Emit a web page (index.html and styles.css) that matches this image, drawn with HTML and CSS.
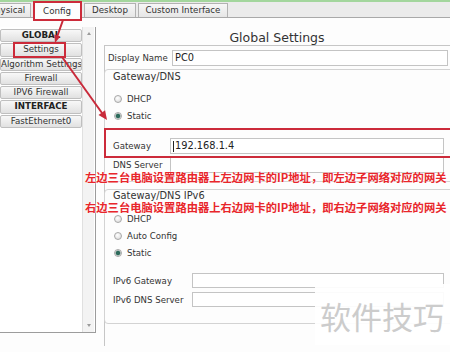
FILE: index.html
```html
<!DOCTYPE html>
<html>
<head>
<meta charset="utf-8">
<link rel="stylesheet" href="styles.css">
</head>
<body>
<div class="topline"></div>
<div class="tabbar">
  <div class="tab t-phys">Physical</div>
  <div class="tab t-config active">Config</div>
  <div class="tab t-desk">Desktop</div>
  <div class="tab t-custom">Custom Interface</div>
</div>
<div class="main">
  <div class="side">
    <div class="side-list">
      <div class="item bold">GLOBAL</div>
      <div class="item">Settings</div>
      <div class="item">Algorithm Settings</div>
      <div class="item">Firewall</div>
      <div class="item">IPV6 Firewall</div>
      <div class="item bold">INTERFACE</div>
      <div class="item">FastEthernet0</div>
    </div>
    <div class="scroll"><span class="arr up"></span><span class="arr down"></span></div>
  </div>
  <div class="content">
    <div class="title">Global Settings</div>
    <div class="frame">
      <div class="row dn"><span class="lbl">Display Name</span><span class="input w-dn">PC0</span></div>
      <div class="group g1">
        <div class="legend">Gateway/DNS</div>
        <div class="radios">
          <div class="radio"><span class="dot"></span>DHCP</div>
          <div class="radio on"><span class="dot"></span>Static</div>
        </div>
        <div class="row r-gw"><span class="lbl">Gateway</span><span class="input w1"><span class="caret"></span>192.168.1.4</span></div>
        <div class="row r-dns"><span class="lbl">DNS Server</span><span class="input w1"></span></div>
      </div>
      <div class="group g2">
        <div class="legend">Gateway/DNS IPv6</div>
        <div class="radios">
          <div class="radio"><span class="dot"></span>DHCP</div>
          <div class="radio"><span class="dot"></span>Auto Config</div>
          <div class="radio on"><span class="dot"></span>Static</div>
        </div>
        <div class="row r-v6gw"><span class="lbl">IPv6 Gateway</span><span class="input w2"></span></div>
        <div class="row r-v6dns"><span class="lbl">IPv6 DNS Server</span><span class="input w2"></span></div>
      </div>
    </div>
  </div>
</div>

<div class="box b-config"></div>
<div class="box b-settings"></div>
<div class="box b-gw"></div>
<svg class="arrows" width="450" height="352" viewBox="0 0 450 352">
  <line x1="63" y1="20" x2="57" y2="37" stroke="#c92a3a" stroke-width="2"/>
  <polygon points="55,43 60.3,36.4 54.3,34.4" fill="#c92a3a"/>
  <line x1="62" y1="57" x2="102" y2="113" stroke="#c92a3a" stroke-width="2"/>
  <polygon points="107,120 98.5,114.9 105.1,110.3" fill="#c92a3a"/>
</svg>
<div class="note n1">左边三台电脑设置路由器上左边网卡的IP地址，即左边子网络对应的网关</div>
<div class="note n2">右边三台电脑设置路由器上右边网卡的IP地址，即右边子网络对应的网关</div>
<div class="wm">软件技巧</div>
</body>
</html>
```
FILE: styles.css
```css
body {
  margin: 0;
  width: 450px;
  height: 352px;
  overflow: hidden;
  position: relative;
  background: #fdfdfd;
  font-family: "DejaVu Sans", sans-serif;
  color: #333;
}
.topline {
  height: 2px;
  background: #a3d69d;
}
.tabbar {
  height: 15px;
  background: #ebebeb;
  border-bottom: 1px solid #a9a9a9;
  display: flex;
  align-items: flex-end;
  gap: 2px;
  margin-left: -16px;
}
.tab {
  box-sizing: border-box;
  height: 14px;
  border: 1px solid #b2b2b2;
  border-bottom: none;
  background: linear-gradient(#f7f7f7, #e6e6e6);
  font-size: 8.7px;
  line-height: 13px;
  text-align: center;
  white-space: nowrap;
  color: #333;
}
.t-phys { width: 47px; }
.t-config { width: 48px; }
.t-desk { width: 52px; margin-left: 1px; }
.t-custom { width: 90px; }
.tab.active {
  height: 16px;
  margin-bottom: -1px;
  background: #fdfdfd;
  line-height: 16px;
}
.main {
  display: flex;
  align-items: flex-start;
}
.side {
  width: 95px;
  height: 305px;
  margin-top: 9px;
  border-right: 1px solid #9c9c9c;
  border-bottom: 1px solid #9c9c9c;
  display: flex;
  background: #fff;
}
.side-list {
  width: 82px;
  padding-top: 2px;
  display: flex;
  flex-direction: column;
  gap: 1px;
}
.item {
  box-sizing: border-box;
  height: 13.3px;
  line-height: 11.5px;
  border: 1px solid #bfbfbf;
  border-radius: 2px;
  background: linear-gradient(#f8f8f8, #e1e1e1);
  font-size: 8.7px;
  text-align: center;
  white-space: nowrap;
  overflow: hidden;
  color: #333;
}
.item.bold { font-weight: bold; color: #222; }
.scroll {
  width: 12px;
  border-left: 1px solid #e0e0e0;
  background: #f3f3f3;
  display: flex;
  flex-direction: column;
  justify-content: space-between;
  align-items: center;
  padding: 5px 0;
  box-sizing: border-box;
}
.arr {
  width: 0;
  height: 0;
  border-left: 2.5px solid transparent;
  border-right: 2.5px solid transparent;
}
.arr.up { border-bottom: 3px solid #9a9a9a; }
.arr.down { border-top: 3px solid #9a9a9a; }
.content {
  margin-left: 8px;
  width: 346px;
  margin-top: 9px;
}
.title {
  box-sizing: border-box;
  height: 18px;
  padding-top: 4px;
  font-size: 12.5px;
  line-height: 14px;
  text-align: center;
  color: #333;
}
.frame {
  border-top: 1px solid #c6c6c6;
  border-left: 1px solid #c6c6c6;
  height: 300px;
}
.row {
  display: flex;
  align-items: center;
  height: 16px;
}
.lbl {
  font-size: 8.6px;
  white-space: nowrap;
  color: #333;
}
.input {
  box-sizing: border-box;
  height: 16px;
  border: 1px solid #c4c4c4;
  background: #fff;
  font-size: 9.8px;
  line-height: 14px;
  padding-left: 2px;
  color: #222;
  display: flex;
  align-items: center;
}
.caret {
  width: 1px;
  height: 11px;
  background: #222;
  margin-right: 1px;
}
.dn { margin-top: 4px; padding-left: 3px; }
.dn .lbl { width: 64px; }
.w-dn { width: 276px; }
.group {
  box-sizing: border-box;
  width: 360px;
  margin-left: -1px;
  border: 1px solid #d3d3d3;
  border-radius: 4px;
  padding-left: 8px;
}
.legend {
  font-size: 9.8px;
  height: 14px;
  line-height: 14px;
  color: #333;
}
.radios { padding-left: 1px; }
.radio {
  height: 17px;
  display: flex;
  align-items: center;
  font-size: 8.6px;
  color: #333;
}
.dot {
  box-sizing: border-box;
  width: 8px;
  height: 8px;
  border: 1px solid #a8a8a8;
  border-radius: 50%;
  margin-right: 5px;
  background: radial-gradient(circle at 40% 35%, #ffffff, #d6d6d6);
}
.radio.on .dot {
  background: radial-gradient(circle, #2d6a5b 0 1.8px, #7fa79c 2.3px, #dcdcdc 2.8px);
}
.g1 { margin-top: 3px; padding-bottom: 8px; }
.g1 .radios { margin-top: 6px; }
.g1 .lbl { width: 57px; }
.w1 { width: 274px; }
.r-gw { margin-top: 14px; }
.r-dns { margin-top: 3px; }
.g2 { margin-top: 7px; padding-bottom: 16px; }
.g2 .legend { height: 12px; line-height: 12px; }
.g2 .radios { margin-top: 8px; }
.g2 .row { height: 15px; }
.g2 .input { height: 15px; }
.g2 .lbl { width: 79px; }
.w2 { width: 252px; }
.r-v6gw { margin-top: 12px; }
.r-v6dns { margin-top: 4px; }

.box {
  position: absolute;
  box-sizing: border-box;
  border: 2px solid #cc2b3a;
}
.b-config { left: 33px; top: 1px; width: 49px; height: 20px; }
.b-settings { left: 13px; top: 42px; width: 53px; height: 16px; }
.b-gw { left: 104px; top: 128px; width: 360px; height: 30px; }
.arrows {
  position: absolute;
  left: 0;
  top: 0;
}
.note {
  position: absolute;
  left: 85px;
  font-family: "Noto Sans CJK SC", sans-serif;
  font-size: 11.3px;
  font-weight: 700;
  line-height: 14px;
  color: #e8262b;
  white-space: nowrap;
  text-shadow: 0 0 2px #fff, 0 0 1px #fff;
}
.n1 { top: 170px; }
.n2 { top: 200px; }
.wm {
  position: absolute;
  left: 315px;
  top: 284px;
  width: 135px;
  height: 61px;
  box-sizing: border-box;
  padding-left: 5px;
  background: rgba(255, 255, 255, 0.92);
  font-family: "Noto Sans CJK SC", sans-serif;
  font-size: 31px;
  line-height: 64px;
  color: #cccccc;
  white-space: nowrap;
}
```
